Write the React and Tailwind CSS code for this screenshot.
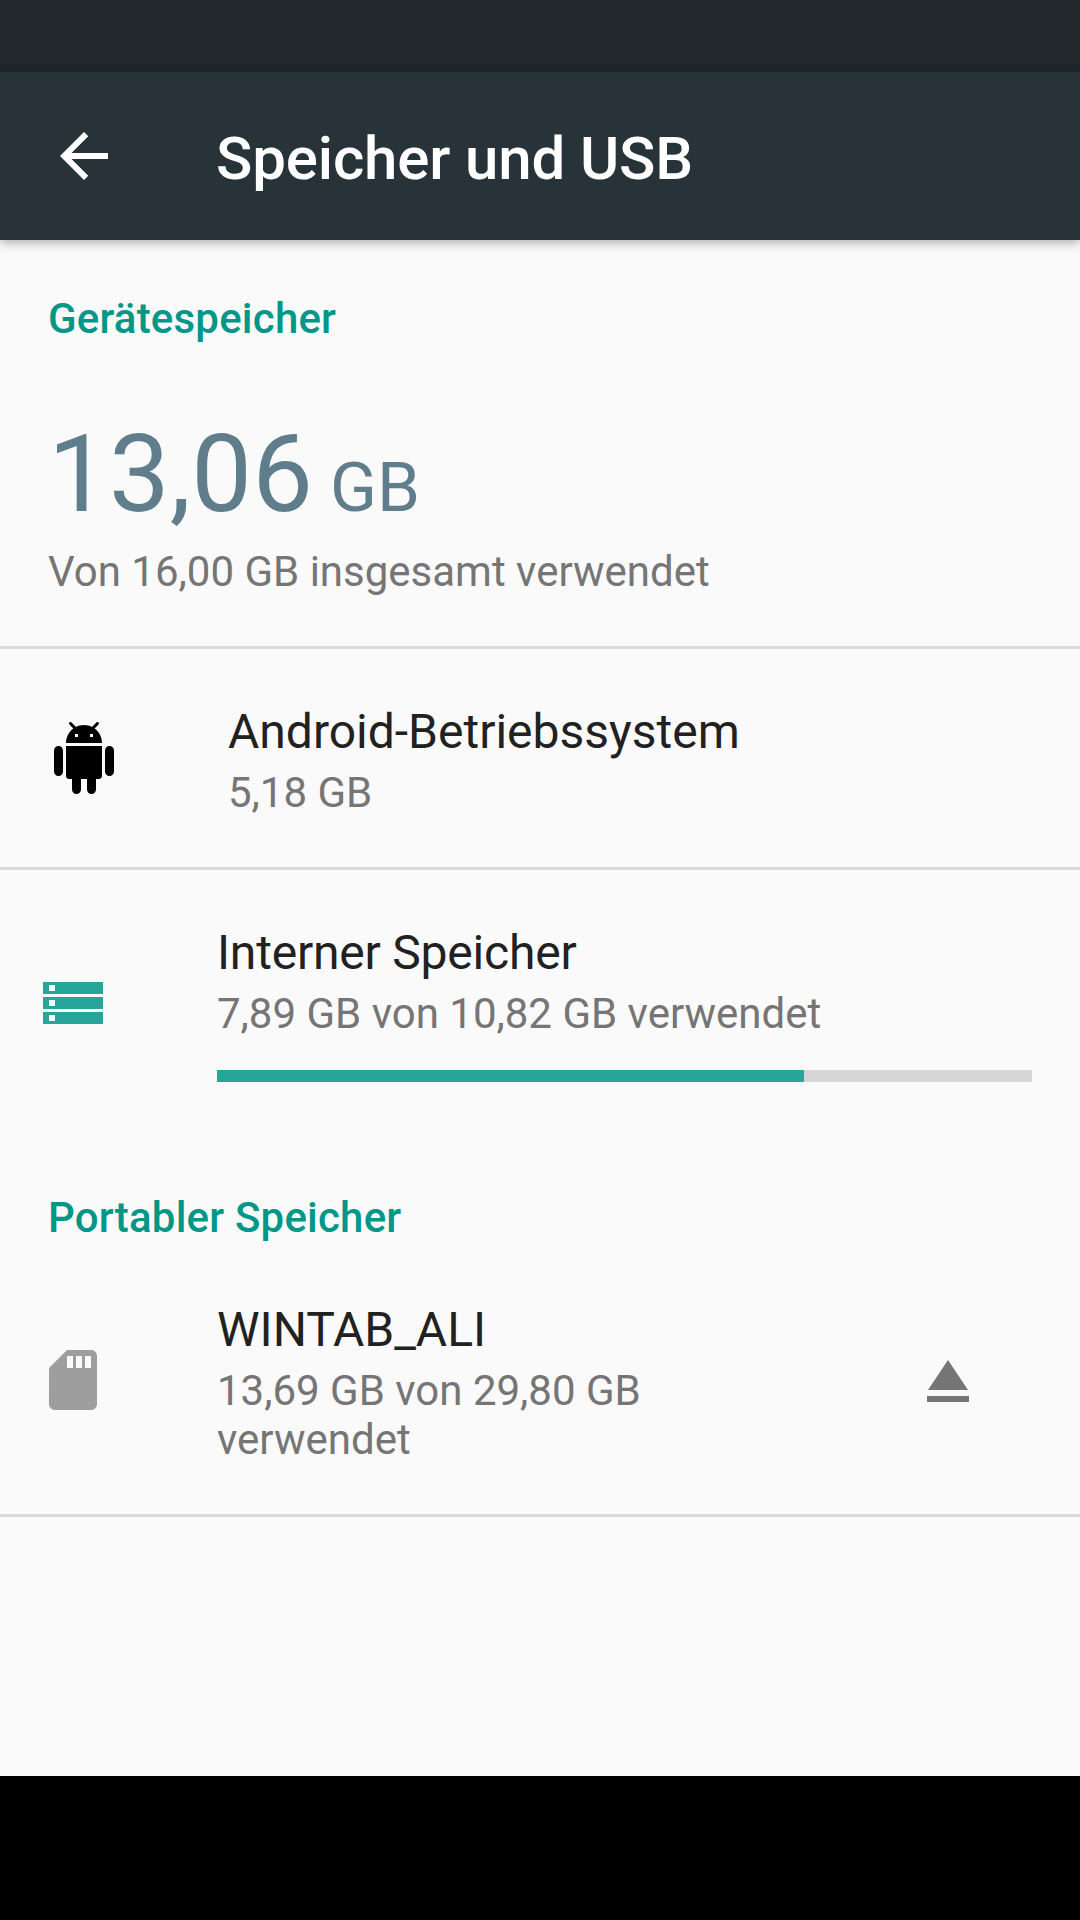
const font = { fontFamily: 'Roboto, sans-serif' }

function SectionLabel({ children }) {
  return <p className="text-[42px] leading-[56px] font-medium tracking-[0.2px] text-[#009688]">{children}</p>
}

function Divider() {
  return <div className="h-[3px] bg-[#dadada]" />
}

function RowText({ title, sub, titleClass = '' }) {
  return (
    <>
      <p className={`text-[48px] leading-[60px] mb-[6px] text-[#212121] ${titleClass}`}>{title}</p>
      <p className="text-[42px] leading-[49px] text-[#757575]">{sub}</p>
    </>
  )
}

export default function App() {
  return (
    <div className="w-[1080px] h-[1920px] flex flex-col bg-[#fafafa] overflow-hidden antialiased" style={font}>
      <div className="h-[72px] shrink-0 bg-[#21272b]" />
      <div className="h-[168px] shrink-0 bg-[#283339] flex items-center shadow-[0_3px_10px_rgba(0,0,0,0.3)] relative z-10">
        <svg className="ml-[48px] w-[72px] h-[72px]" viewBox="0 0 24 24" fill="#fff">
          <path d="M20 11H7.83l5.59-5.59L12 4l-8 8 8 8 1.41-1.41L7.83 13H20v-2z" />
        </svg>
        <h1 className="ml-[96px] pt-[5px] text-[60px] font-medium tracking-[-0.15px] text-white">Speicher und USB</h1>
      </div>

      <div className="flex-1 flex flex-col">
        <div className="h-[406px] px-[48px] pt-[51px]">
          <SectionLabel>Gerätespeicher</SectionLabel>
          <div className="flex items-baseline mt-[61px] h-[132px]">
            <span className="text-[108px] leading-[132px] tracking-[0.2px] text-[#607d8b]">13,06</span>
            <span className="ml-[17px] text-[69px] leading-[132px] text-[#607d8b]">GB</span>
          </div>
          <p className="mt-[4px] text-[42px] leading-[56px] text-[#757575]">Von 16,00 GB insgesamt verwendet</p>
        </div>
        <Divider />

        <div className="h-[218px] flex items-center">
          <svg className="ml-[48px] w-[72px] h-[72px]" viewBox="0 0 24 24" fill="#000">
            <path d="M6 18c0 .55.45 1 1 1h1v3.5c0 .83.67 1.5 1.5 1.5s1.5-.67 1.5-1.5V19h2v3.5c0 .83.67 1.5 1.5 1.5s1.5-.67 1.5-1.5V19h1c.55 0 1-.45 1-1V8H6v10zM3.5 8C2.67 8 2 8.67 2 9.5v7c0 .83.67 1.5 1.5 1.5S5 17.33 5 16.5v-7C5 8.67 4.33 8 3.5 8zm17 0c-.83 0-1.5.67-1.5 1.5v7c0 .83.67 1.5 1.5 1.5s1.5-.67 1.5-1.5v-7c0-.83-.67-1.5-1.5-1.5zm-4.97-5.84l1.3-1.3c.2-.2.2-.51 0-.71-.2-.2-.51-.2-.71 0l-1.48 1.48C13.85 1.23 12.95 1 12 1c-.96 0-1.86.23-2.66.63L7.85.15c-.2-.2-.51-.2-.71 0-.2.2-.2.51 0 .71l1.31 1.31C6.97 3.26 6 5.01 6 7h12c0-1.99-.97-3.75-2.47-4.84zM10 5H9V4h1v1zm5 0h-1V4h1v1z" />
          </svg>
          <div className="ml-[108px] pt-[2px]">
            <RowText title="Android-Betriebssystem" sub="5,18 GB" />
          </div>
        </div>
        <Divider />

        <div className="h-[296px] flex">
          <svg className="ml-[37px] mt-[100px] w-[72px] h-[72px]" viewBox="0 0 24 24" fill="#26a69a">
            <path d="M2 4h20v4H2zM4 5v2h2V5zM2 9h20v4H2zM4 10v2h2v-2zM2 14h20v4H2zM4 15v2h2v-2z" fillRule="evenodd" />
          </svg>
          <div className="ml-[108px] flex-1 pt-[53px] pr-[48px]">
            <RowText title="Interner Speicher" sub="7,89 GB von 10,82 GB verwendet" titleClass="tracking-[-0.2px]" />
            <div className="mt-[32px] h-[12px] bg-[#d6d6d6]">
              <div className="h-full bg-[#26a69a]" style={{ width: '72%' }} />
            </div>
          </div>
        </div>

        <div className="h-[102px] px-[48px] pt-[24px]">
          <SectionLabel>Portabler Speicher</SectionLabel>
        </div>

        <div className="h-[246px] flex">
          <svg className="ml-[37px] mt-[76px] w-[72px] h-[72px] shrink-0" viewBox="0 0 24 24" fill="#9e9e9e">
            <path d="M18 2h-8L4.02 8 4 20c0 1.1.9 2 2 2h12c1.1 0 2-.9 2-2V4c0-1.1-.9-2-2-2zm-6 6h-2V4h2v4zm3 0h-2V4h2v4zm3 0h-2V4h2v4z" />
          </svg>
          <div className="ml-[108px] w-[480px] pt-[32px]">
            <RowText title="WINTAB_ALI" sub="13,69 GB von 29,80 GB verwendet" />
          </div>
          <svg className="ml-[215px] mt-[77px] w-[72px] h-[72px] shrink-0" viewBox="0 0 24 24" fill="#757575">
            <path d="M5 17h14v2H5zm7-12L5.33 15h13.34z" />
          </svg>
        </div>
        <Divider />
      </div>

      <div className="h-[144px] shrink-0 bg-black" />
    </div>
  )
}
